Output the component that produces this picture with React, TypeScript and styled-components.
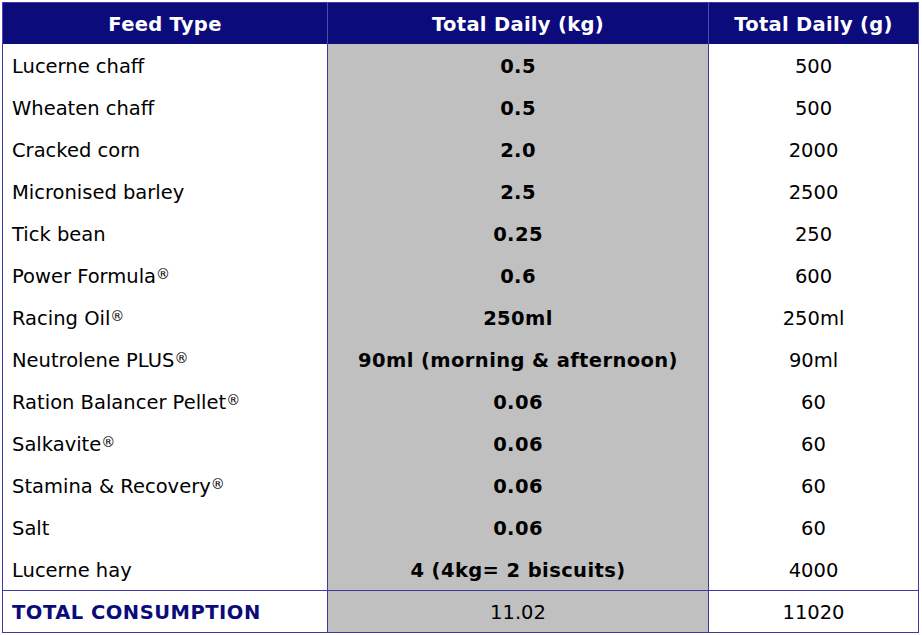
import React from 'react'
import styled, { createGlobalStyle } from 'styled-components'

const Global = createGlobalStyle`
  body {
    margin: 0;
    background: #ffffff;
    font-family: "DejaVu Sans", Verdana, sans-serif;
  }
`

const Table = styled('table')`
  margin: 2px;
  width: 916px;
  border-collapse: collapse;
  border: 1px solid #3a3aa0;
  font-size: 19.5px;
  color: #000;
  table-layout: fixed;
`

const HeadCell = styled('th')`
  height: 39px;
  background: #0b0b7b;
  color: #ffffff;
  font-weight: bold;
  font-size: 19.5px;
  text-align: center;
  padding: 2px 0 0;
  border-left: 1px solid #4a4ab0;
  letter-spacing: 0.3px;
`

const Cell = styled('td')<{ $shade?: boolean; $bold?: boolean; $align?: string; $top?: boolean }>`
  height: ${(p) => (p.$top ? '40px' : '39px')};
  padding: ${(p) => (p.$top ? '1px' : '3px')} 0 0 ${(p) => (p.$align === 'left' ? '9px' : '0')};
  text-align: ${(p) => p.$align || 'center'};
  background: ${(p) => (p.$shade ? '#c0c0c0' : '#ffffff')};
  font-weight: ${(p) => (p.$bold ? 'bold' : 'normal')};
  letter-spacing: ${(p) => (p.$bold ? '0.4px' : '0')};
  border-left: 1px solid #3a3aa0;
  border-top: ${(p) => (p.$top ? '1px solid #3a3aa0' : 'none')};
  white-space: nowrap;
`

const TotalLabel = styled('span')`
  color: #0b0b7b;
  font-weight: bold;
  letter-spacing: 0.5px;
`

const Reg = styled('sup')`
  font-size: 14px;
  vertical-align: 4px;
  line-height: 0;
`

type Row = { name: string; reg?: boolean; kg: string; g: string }

const rows: Row[] = [
  { name: 'Lucerne chaff', kg: '0.5', g: '500' },
  { name: 'Wheaten chaff', kg: '0.5', g: '500' },
  { name: 'Cracked corn', kg: '2.0', g: '2000' },
  { name: 'Micronised barley', kg: '2.5', g: '2500' },
  { name: 'Tick bean', kg: '0.25', g: '250' },
  { name: 'Power Formula', reg: true, kg: '0.6', g: '600' },
  { name: 'Racing Oil', reg: true, kg: '250ml', g: '250ml' },
  { name: 'Neutrolene PLUS', reg: true, kg: '90ml (morning & afternoon)', g: '90ml' },
  { name: 'Ration Balancer Pellet', reg: true, kg: '0.06', g: '60' },
  { name: 'Salkavite', reg: true, kg: '0.06', g: '60' },
  { name: 'Stamina & Recovery', reg: true, kg: '0.06', g: '60' },
  { name: 'Salt', kg: '0.06', g: '60' },
  { name: 'Lucerne hay', kg: '4 (4kg= 2 biscuits)', g: '4000' },
]

export default function App() {
  return (
    <>
      <Global />
      <Table>
        <colgroup>
          <col style={{ width: 325 }} />
          <col style={{ width: 381 }} />
          <col style={{ width: 210 }} />
        </colgroup>
        <thead>
          <tr>
            <HeadCell>Feed Type</HeadCell>
            <HeadCell>Total Daily (kg)</HeadCell>
            <HeadCell>Total Daily (g)</HeadCell>
          </tr>
        </thead>
        <tbody>
          {rows.map((r) => (
            <tr key={r.name}>
              <Cell $align="left">
                {r.name}
                {r.reg && <Reg>®</Reg>}
              </Cell>
              <Cell $shade $bold>{r.kg}</Cell>
              <Cell>{r.g}</Cell>
            </tr>
          ))}
          <tr>
            <Cell $align="left" $top>
              <TotalLabel>TOTAL CONSUMPTION</TotalLabel>
            </Cell>
            <Cell $shade $top>11.02</Cell>
            <Cell $top>11020</Cell>
          </tr>
        </tbody>
      </Table>
    </>
  )
}
